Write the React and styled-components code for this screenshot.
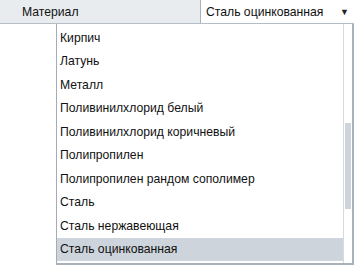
import React from 'react'
import styled, { createGlobalStyle } from 'styled-components'

const GlobalStyle = createGlobalStyle`
  html, body {
    margin: 0;
    padding: 0;
    background: #ffffff;
  }
  body {
    font-family: "Liberation Sans", Arial, sans-serif;
    font-size: 12.2px;
    color: #111111;
  }
`

const Page = styled.div`
  width: 354px;
  height: 265px;
  overflow: hidden;
  display: flex;
  flex-direction: column;
`

const HeaderRow = styled.div`
  display: flex;
  height: 23px;
  background: #e9ecef;
  border-bottom: 1px solid #b4bcc6;
`

const LabelCell = styled.div`
  width: 178px;
  padding-left: 22px;
  display: flex;
  align-items: center;
`

const SelectBox = styled.div`
  flex: 1;
  display: flex;
  align-items: center;
  justify-content: space-between;
  background: #ffffff;
  border-left: 1px solid #a9b1bb;
  padding: 0 5px 0 5px;
`

const Arrow = styled.span`
  font-size: 9px;
  color: #222;
`

const DropList = styled.div`
  flex: 1;
  margin-left: 56px;
  display: flex;
  border-left: 1px solid #a3acb8;
  border-right: 2px solid #a9b1bb;
  border-bottom: 2px solid #a9b1bb;
  min-height: 0;
`

const Items = styled.div`
  flex: 1;
  display: flex;
  flex-direction: column;
  padding-top: 2px;
`

const Item = styled.div`
  height: 23.5px;
  flex-shrink: 0;
  display: flex;
  align-items: center;
  padding-left: 3px;
  white-space: nowrap;
  background: ${p => (p.selected ? '#cdd4db' : 'transparent')};
`

const ScrollTrack = styled.div`
  width: 8px;
  border-left: 1px solid #d6dae0;
  position: relative;
`

const ScrollThumb = styled.div`
  position: absolute;
  left: 1px;
  width: 6px;
  top: 99px;
  height: 86px;
  background: #cdd4db;
`

const materials = [
  'Кирпич',
  'Латунь',
  'Металл',
  'Поливинилхлорид белый',
  'Поливинилхлорид коричневый',
  'Полипропилен',
  'Полипропилен рандом сополимер',
  'Сталь',
  'Сталь нержавеющая',
  'Сталь оцинкованная',
]

export default function App() {
  const selected = 'Сталь оцинкованная'
  return (
    <>
      <GlobalStyle />
      <Page>
        <HeaderRow>
          <LabelCell>Материал</LabelCell>
          <SelectBox>
            <span>{selected}</span>
            <Arrow>▼</Arrow>
          </SelectBox>
        </HeaderRow>
        <DropList>
          <Items>
            {materials.map(m => (
              <Item key={m} selected={m === selected}>{m}</Item>
            ))}
          </Items>
          <ScrollTrack>
            <ScrollThumb />
          </ScrollTrack>
        </DropList>
      </Page>
    </>
  )
}
